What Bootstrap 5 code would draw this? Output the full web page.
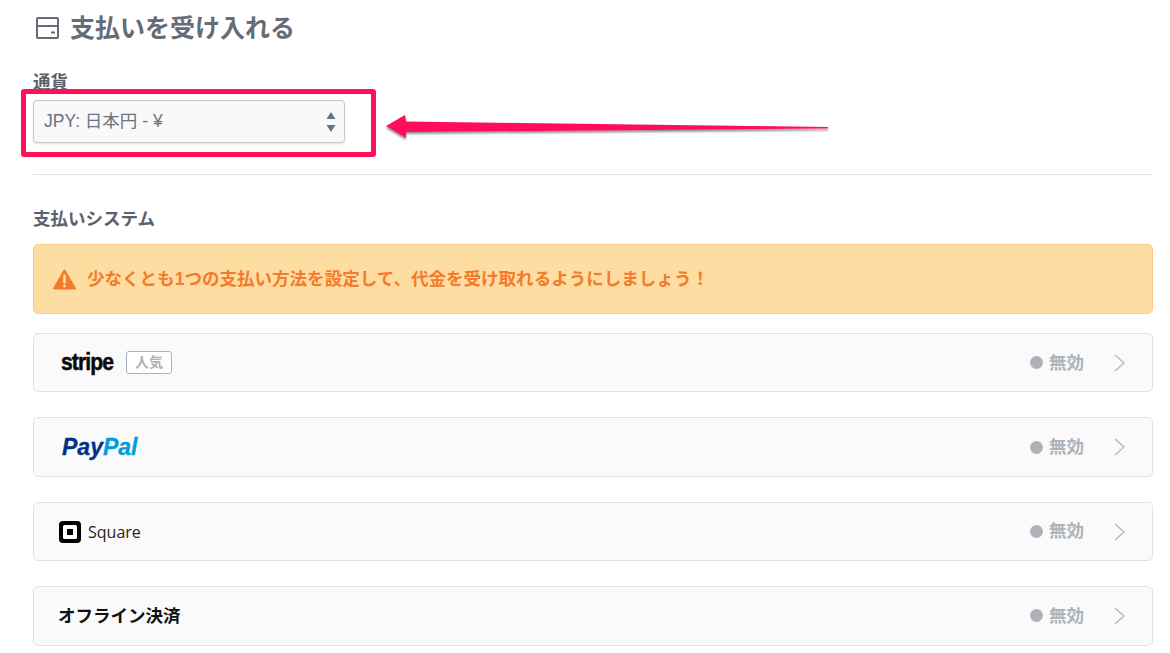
<!DOCTYPE html>
<html lang="ja">
<head>
  <meta charset="UTF-8">
  <title>支払いを受け入れる</title>
  <link href="https://cdn.jsdelivr.net/npm/bootstrap@5.3.2/dist/css/bootstrap.min.css" rel="stylesheet">
  <style>
    body {
      background: #fff;
      font-family: "Liberation Sans", "Noto Sans CJK JP", sans-serif;
      overflow: hidden;
    }
    .pay-page {
      position: relative;
      width: 1120px;
      height: 653px;
      margin-left: 33px;
    }
    .pay-title {
      height: 38px;
      padding-top: 9px;
      margin-bottom: 0;
      font-size: 25px;
      line-height: 38px;
      font-weight: 700;
      color: #666c76;
      box-sizing: content-box;
    }
    .pay-title svg { margin-left: 3px; margin-right: 11px; }
    .pay-label {
      margin: 26px 0 0;
      height: 27px;
      font-size: 17.5px;
      line-height: 18px;
      font-weight: 700;
      color: #5b6069;
    }
    .pay-select {
      width: 312px;
      height: 43px;
      padding: 0 30px 0 10px;
      font-size: 17.5px;
      color: #6b7280;
      border: 1px solid #c4c9d0;
      border-radius: 4px;
      background-color: #f9f9f9;
      background-image: url("data:image/svg+xml,%3Csvg xmlns='http://www.w3.org/2000/svg' width='10' height='20'%3E%3Cpath d='M5 0l4.5 7H.5zM5 20l4.5-7H.5z' fill='%23637381'/%3E%3C/svg%3E");
      background-size: 10px 20px;
      background-position: right 8px center;
      background-repeat: no-repeat;
      box-shadow: 0 1px 2px rgba(0,0,0,.12);
    }
    .pay-rule {
      margin: 31px 0 0;
      border-top: 1px solid #dfe3e8;
      opacity: 1;
    }
    .pay-sub {
      margin: 34px 0 0;
      height: 35px;
      font-size: 17.5px;
      line-height: 20px;
      font-weight: 700;
      color: #5b6069;
    }
    .pay-warn {
      height: 70px;
      margin-bottom: 19px;
      padding: 0 19px;
      gap: 11px;
      font-size: 17.55px;
      font-weight: 700;
      color: #f37b2b;
      background: #fedda3;
      border: 1px solid #fbc98a;
      border-radius: 5px;
    }
    .pay-row {
      height: 59.25px;
      margin-bottom: 25.2px;
      padding: 0 27px 0 26px;
      background: #fafafa;
      border: 1px solid #dfe3e8;
      border-radius: 5px;
    }
    .pay-tag {
      margin-left: 13px;
      padding: 0 8px;
      height: 23px;
      font-size: 14px;
      line-height: 21px;
      font-weight: 700;
      color: #acb2b8;
      background: #fff;
      border: 1px solid #acb2b8;
      border-radius: 3px;
    }
    .stripe-logo {
      margin-left: 1px;
      font-size: 24px;
      font-weight: 700;
      letter-spacing: -1px;
      color: #0a0a0a;
      -webkit-text-stroke: .5px #0a0a0a;
      transform: translateY(-1px) scaleX(.88);
      transform-origin: left center;
      width: 52px;
    }
    .paypal-logo {
      margin-left: 2px;
      font-size: 23px;
      font-weight: 700;
      font-style: italic;
      color: #003087;
      -webkit-text-stroke: .3px currentColor;
    }
    .paypal-logo span { color: #009cde; }
    .square-logo { font-size: 16px; color: #222; font-family: "Open Sans", sans-serif; margin-left: -1px; }
    .square-logo svg { margin-right: -1px; }
    .offline-name { font-size: 17.5px; font-weight: 700; color: #111; margin-left: -2px; }
    .pay-status {
      gap: 6px;
      font-size: 17.5px;
      font-weight: 700;
      color: #acb2b8;
    }
    .pay-dot {
      width: 13px;
      height: 13px;
      border-radius: 50%;
      background: #acb2b8;
    }
    .pay-chevron { margin-left: 29px; }
    .pay-mark {
      position: absolute;
      left: -12px;
      top: 89px;
      width: 355px;
      height: 68px;
      border: 5px solid #ff1059;
      border-radius: 3px;
      pointer-events: none;
    }
    .pay-arrow {
      position: absolute;
      left: 351px;
      top: 109px;
      pointer-events: none;
    }
  </style>
</head>
<body>
  <div class="pay-page">
    <h1 class="pay-title d-flex align-items-center">
      <svg width="23" height="22" viewBox="0 0 23 22" fill="none" stroke="#666c76" stroke-width="2">
        <rect x="1" y="1" width="21" height="20" rx="1"/>
        <path d="M1 9h21M15 15.5h4"/>
      </svg>
      支払いを受け入れる
    </h1>

    <div class="pay-label">通貨</div>
    <select class="pay-select form-select d-block">
      <option>JPY: 日本円 - ¥</option>
    </select>

    <hr class="pay-rule">

    <div class="pay-sub">支払いシステム</div>

    <div class="pay-warn d-flex align-items-center">
      <svg width="23" height="21" viewBox="0 0 23 21">
        <path d="M11.5 1.5 22 19.5H1z" fill="#f37b2b" stroke="#f37b2b" stroke-width="2" stroke-linejoin="round"/>
        <path d="M11.5 6.5v7" stroke="#fedda3" stroke-width="2.6" stroke-linecap="round"/>
        <circle cx="11.5" cy="17" r="1.5" fill="#fedda3"/>
      </svg>
      <span>少なくとも1つの支払い方法を設定して、代金を受け取れるようにしましょう！</span>
    </div>

    <div class="pay-row d-flex align-items-center">
      <span class="stripe-logo">stripe</span>
      <span class="pay-tag">人気</span>
      <span class="pay-status d-flex align-items-center ms-auto">
        <span class="pay-dot"></span>無効
      </span>
      <svg class="pay-chevron" width="12" height="18" viewBox="0 0 12 18" fill="none" stroke="#b5bac0" stroke-width="1.4"><path d="M2 1l9 8-9 8"/></svg>
    </div>

    <div class="pay-row d-flex align-items-center">
      <span class="paypal-logo">Pay<span>Pal</span></span>
      <span class="pay-status d-flex align-items-center ms-auto">
        <span class="pay-dot"></span>無効
      </span>
      <svg class="pay-chevron" width="12" height="18" viewBox="0 0 12 18" fill="none" stroke="#b5bac0" stroke-width="1.4"><path d="M2 1l9 8-9 8"/></svg>
    </div>

    <div class="pay-row d-flex align-items-center">
      <span class="square-logo d-flex align-items-center gap-2">
        <svg width="22" height="22" viewBox="0 0 22 22">
          <rect width="22" height="22" rx="4" fill="#000"/>
          <rect x="4" y="4" width="14" height="14" rx="1.5" fill="#fff"/>
          <rect x="8" y="8" width="6" height="6" fill="#000"/>
        </svg>
        Square
      </span>
      <span class="pay-status d-flex align-items-center ms-auto">
        <span class="pay-dot"></span>無効
      </span>
      <svg class="pay-chevron" width="12" height="18" viewBox="0 0 12 18" fill="none" stroke="#b5bac0" stroke-width="1.4"><path d="M2 1l9 8-9 8"/></svg>
    </div>

    <div class="pay-row d-flex align-items-center">
      <span class="offline-name">オフライン決済</span>
      <span class="pay-status d-flex align-items-center ms-auto">
        <span class="pay-dot"></span>無効
      </span>
      <svg class="pay-chevron" width="12" height="18" viewBox="0 0 12 18" fill="none" stroke="#b5bac0" stroke-width="1.4"><path d="M2 1l9 8-9 8"/></svg>
    </div>

    <!-- 注釈 -->
    <div class="pay-mark"></div>
    <svg class="pay-arrow" width="450" height="34" viewBox="0 0 450 34">
      <defs>
        <filter id="arrowShadow" x="-5%" y="-50%" width="110%" height="200%">
          <feDropShadow dx="0" dy="2" stdDeviation="1.2" flood-color="#000" flood-opacity=".45"/>
        </filter>
      </defs>
      <path d="M2 17 21 6 22 12.5 444 18 444 19.5 22 23 22 29z" fill="#ff1059" filter="url(#arrowShadow)"/>
    </svg>
  </div>
</body>
</html>
